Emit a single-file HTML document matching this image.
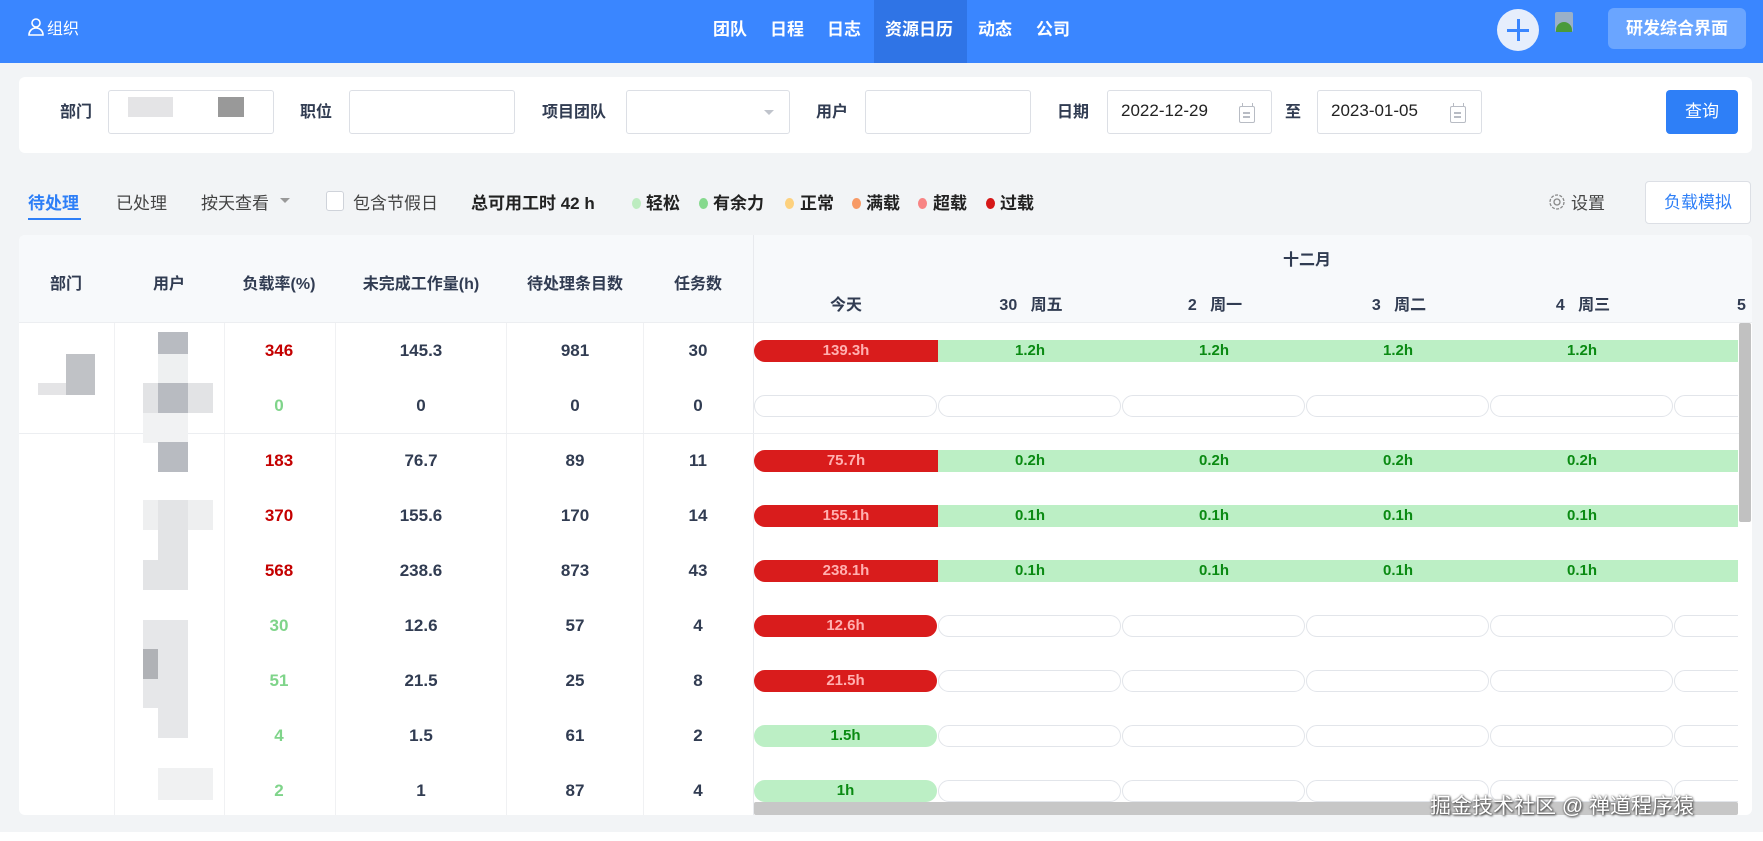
<!DOCTYPE html>
<html><head><meta charset="utf-8">
<style>
*{margin:0;padding:0;box-sizing:border-box}
body{width:1763px;height:841px;background:#f2f4f6;font-family:"Liberation Sans","Noto Sans CJK SC",sans-serif;position:relative;overflow:hidden;color:#313c52}
.a{position:absolute}
.hdr{left:0;top:0;width:1763px;height:63px;background:#3a86ff}
.nav{top:0;height:63px;line-height:60px;color:#fff;font-weight:bold;font-size:17px}
.card{background:#fff;border-radius:6px}
.lbl{font-size:16px;font-weight:bold;color:#313c52;line-height:20px}
.inp{height:44px;border:1px solid #dcdfe5;border-radius:3px;background:#fff}
.cal{width:16px;height:17px;border:1.5px solid #b8bcc4;border-radius:2px}
.cal:before{content:"";position:absolute;left:3px;top:5px;width:7px;height:1.5px;background:#b8bcc4;box-shadow:0 4px 0 #b8bcc4}
.cal:after{content:"";position:absolute;left:2px;top:-4px;width:9px;height:3px;border-left:1.5px solid #b8bcc4;border-right:1.5px solid #b8bcc4}
.th{font-size:16px;font-weight:bold;color:#313c52;text-align:center;transform:translateX(-50%);white-space:nowrap}
.td{font-size:17px;font-weight:bold;text-align:center;width:120px;margin-left:-60px;line-height:20px}
.r{color:#c40000}.g{color:#7fd48a}
.bar{height:22px;line-height:22px;font-size:15px;font-weight:bold;text-align:center}
.red{background:#d91c1c;color:#ffb0b0}
.grn{background:#bcefc5;color:#0a8a12}
.emp{height:22px;border:1px solid #e2e5ea;border-radius:11px;background:#fff}
.blk{background:#b8bbc1}
</style></head><body>
<div class="a hdr"></div>
<svg class="a" style="left:27px;top:17px" width="18" height="19" viewBox="0 0 18 19"><circle cx="9" cy="6" r="4" fill="none" stroke="#fff" stroke-width="1.6"/><path d="M2 18c0-4 3-7 7-7s7 3 7 7z" fill="none" stroke="#fff" stroke-width="1.6"/></svg>
<div class="a" style="left:47px;top:15px;color:#fff;font-size:16px">组织</div>
<div class="a" style="left:874px;top:0;width:93px;height:63px;background:#2f74e6"></div>
<div class="a nav" style="left:713px">团队</div>
<div class="a nav" style="left:770px">日程</div>
<div class="a nav" style="left:827px">日志</div>
<div class="a nav" style="left:885px">资源日历</div>
<div class="a nav" style="left:978px">动态</div>
<div class="a nav" style="left:1036px">公司</div>
<div class="a" style="left:1497px;top:9px;width:42px;height:42px;border-radius:50%;background:#e6eefc"></div>
<div class="a" style="left:1507px;top:29px;width:22px;height:2.5px;background:#3a86ff"></div>
<div class="a" style="left:1517px;top:19px;width:2.5px;height:22px;background:#3a86ff"></div>
<div class="a" style="left:1555px;top:12px;width:18px;height:20px;background:#9ab0c8;border-radius:2px"></div>
<div class="a" style="left:1556px;top:22px;width:16px;height:10px;background:#4a9a3a;border-radius:8px 8px 0 0"></div>
<div class="a" style="left:1608px;top:8px;width:138px;height:41px;border-radius:6px;background:#6aa5ff;color:#fff;font-weight:bold;font-size:17px;line-height:41px;text-align:center">研发综合界面</div>

<div class="a card" style="left:19px;top:77px;width:1733px;height:76px"></div>
<div class="a lbl" style="left:60px;top:103px">部门</div>
<div class="a inp" style="left:108px;top:90px;width:166px"></div>
<div class="a" style="left:128px;top:97px;width:45px;height:20px;background:#e4e4e6"></div>
<div class="a" style="left:218px;top:97px;width:26px;height:20px;background:#999"></div>
<div class="a lbl" style="left:300px;top:103px">职位</div>
<div class="a inp" style="left:349px;top:90px;width:166px"></div>
<div class="a lbl" style="left:542px;top:103px">项目团队</div>
<div class="a inp" style="left:626px;top:90px;width:164px"></div>
<div class="a" style="left:764px;top:110px;border:5px solid transparent;border-top:5px solid #c0c4cc"></div>
<div class="a lbl" style="left:816px;top:103px">用户</div>
<div class="a inp" style="left:865px;top:90px;width:166px"></div>
<div class="a lbl" style="left:1057px;top:103px">日期</div>
<div class="a inp" style="left:1107px;top:90px;width:165px"></div>
<div class="a" style="left:1121px;top:101px;font-size:17px;color:#222">2022-12-29</div>
<div class="a cal" style="left:1239px;top:106px"></div>
<div class="a lbl" style="left:1285px;top:103px">至</div>
<div class="a inp" style="left:1317px;top:90px;width:165px"></div>
<div class="a" style="left:1331px;top:101px;font-size:17px;color:#222">2023-01-05</div>
<div class="a cal" style="left:1450px;top:106px"></div>
<div class="a" style="left:1666px;top:90px;width:72px;height:44px;background:#2e7ff7;border-radius:4px;color:#fff;font-size:17px;line-height:44px;text-align:center">查询</div>

<div class="a" style="left:28px;top:189px;font-size:17px;color:#2e7ff7;font-weight:bold">待处理</div>
<div class="a" style="left:28px;top:218px;width:53px;height:2px;background:#2e7ff7"></div>
<div class="a" style="left:116px;top:189px;font-size:17px;color:#444">已处理</div>
<div class="a" style="left:201px;top:189px;font-size:17px;color:#444">按天查看</div>
<div class="a" style="left:280px;top:198px;border:5px solid transparent;border-top:5px solid #999"></div>
<div class="a" style="left:326px;top:191px;width:18px;height:20px;border:1px solid #cfd3da;border-radius:3px;background:#fff"></div>
<div class="a" style="left:353px;top:189px;font-size:17px;color:#444">包含节假日</div>
<div class="a" style="left:471px;top:189px;font-size:17px;font-weight:bold;color:#222">总可用工时 42 h</div>
<div class="a" style="left:632px;top:198px;width:9px;height:11px;border-radius:50%;background:#bdecc0"></div>
<div class="a" style="left:646px;top:189px;font-size:17px;font-weight:bold;color:#222">轻松</div>
<div class="a" style="left:699px;top:198px;width:9px;height:11px;border-radius:50%;background:#86d98e"></div>
<div class="a" style="left:713px;top:189px;font-size:17px;font-weight:bold;color:#222">有余力</div>
<div class="a" style="left:785px;top:198px;width:9px;height:11px;border-radius:50%;background:#fdd17e"></div>
<div class="a" style="left:800px;top:189px;font-size:17px;font-weight:bold;color:#222">正常</div>
<div class="a" style="left:852px;top:198px;width:9px;height:11px;border-radius:50%;background:#f79a66"></div>
<div class="a" style="left:866px;top:189px;font-size:17px;font-weight:bold;color:#222">满载</div>
<div class="a" style="left:918px;top:198px;width:9px;height:11px;border-radius:50%;background:#f88484"></div>
<div class="a" style="left:933px;top:189px;font-size:17px;font-weight:bold;color:#222">超载</div>
<div class="a" style="left:986px;top:198px;width:9px;height:11px;border-radius:50%;background:#d61818"></div>
<div class="a" style="left:1000px;top:189px;font-size:17px;font-weight:bold;color:#222">过载</div>
<svg class="a" style="left:1548px;top:193px" width="18" height="18" viewBox="0 0 18 18"><circle cx="9" cy="9" r="3" fill="none" stroke="#888" stroke-width="1.3"/><circle cx="9" cy="9" r="7" fill="none" stroke="#888" stroke-width="1.3" stroke-dasharray="3 1.4"/></svg>
<div class="a" style="left:1571px;top:189px;font-size:17px;color:#444">设置</div>
<div class="a" style="left:1645px;top:181px;width:106px;height:43px;border:1px solid #dcdfe5;border-radius:4px;background:#fff;color:#2e7ff7;font-size:17px;line-height:41px;text-align:center">负载模拟</div>

<div class="a card" style="left:19px;top:235px;width:1733px;height:580px;overflow:hidden">
  <div class="a" style="left:0;top:0;width:1733px;height:88px;background:#f7f9fb;border-bottom:1px solid #eceef1"></div>
</div>
<div class="a" style="left:753px;top:235px;width:1px;height:580px;background:#e8eaee"></div>
<div class="a" style="left:114px;top:323px;width:1px;height:492px;background:#f0f1f3"></div>
<div class="a" style="left:224px;top:323px;width:1px;height:492px;background:#f0f1f3"></div>
<div class="a" style="left:335px;top:323px;width:1px;height:492px;background:#f0f1f3"></div>
<div class="a" style="left:506px;top:323px;width:1px;height:492px;background:#f0f1f3"></div>
<div class="a" style="left:643px;top:323px;width:1px;height:492px;background:#f0f1f3"></div>
<div class="a" style="left:19px;top:433px;width:1720px;height:1px;background:#eceef1"></div>

<div class="a th" style="left:66px;top:270px">部门</div>
<div class="a th" style="left:169px;top:270px">用户</div>
<div class="a th" style="left:279px;top:270px">负载率(%)</div>
<div class="a th" style="left:421px;top:270px">未完成工作量(h)</div>
<div class="a th" style="left:575px;top:270px">待处理条目数</div>
<div class="a th" style="left:698px;top:270px">任务数</div>
<div class="a th" style="left:1307px;top:246px">十二月</div>
<div class="a th" style="left:846px;top:291px">今天</div>
<div class="a th" style="left:1031px;top:291px">30&nbsp;&nbsp;&nbsp;周五</div>
<div class="a th" style="left:1215px;top:291px">2&nbsp;&nbsp;&nbsp;周一</div>
<div class="a th" style="left:1399px;top:291px">3&nbsp;&nbsp;&nbsp;周二</div>
<div class="a th" style="left:1583px;top:291px">4&nbsp;&nbsp;&nbsp;周三</div>
<div class="a" style="left:1737px;top:296px;font-size:16px;font-weight:bold;color:#313c52;line-height:20px">5</div>

<div class="a" style="left:38px;top:383px;width:30px;height:12px;background:#e4e4e6"></div>
<div class="a blk" style="left:66px;top:354px;width:29px;height:41px;background:#c0c2c6"></div>
<div class="a blk" style="left:158px;top:332px;width:30px;height:22px"></div>
<div class="a" style="left:158px;top:354px;width:30px;height:30px;background:#eef0f1"></div>
<div class="a" style="left:143px;top:383px;width:70px;height:30px;background:#e2e3e5"></div>
<div class="a blk" style="left:158px;top:383px;width:30px;height:30px"></div>
<div class="a" style="left:143px;top:413px;width:45px;height:30px;background:#f1f2f3"></div>
<div class="a blk" style="left:158px;top:442px;width:30px;height:30px"></div>
<div class="a" style="left:143px;top:500px;width:70px;height:30px;background:#eeeff0"></div>
<div class="a" style="left:158px;top:500px;width:30px;height:60px;background:#e3e4e6"></div>
<div class="a" style="left:143px;top:560px;width:45px;height:30px;background:#e3e4e6"></div>
<div class="a" style="left:143px;top:620px;width:45px;height:88px;background:#e6e7e9"></div>
<div class="a" style="left:143px;top:649px;width:15px;height:30px;background:#b0b2b6"></div>
<div class="a" style="left:158px;top:708px;width:30px;height:30px;background:#e6e7e9"></div>
<div class="a" style="left:158px;top:768px;width:55px;height:32px;background:#f0f1f2"></div>

<div class="a td r" style="left:279px;top:341px">346</div><div class="a td" style="left:421px;top:341px">145.3</div><div class="a td" style="left:575px;top:341px">981</div><div class="a td" style="left:698px;top:341px">30</div>
<div class="a td g" style="left:279px;top:396px">0</div><div class="a td" style="left:421px;top:396px">0</div><div class="a td" style="left:575px;top:396px">0</div><div class="a td" style="left:698px;top:396px">0</div>
<div class="a td r" style="left:279px;top:451px">183</div><div class="a td" style="left:421px;top:451px">76.7</div><div class="a td" style="left:575px;top:451px">89</div><div class="a td" style="left:698px;top:451px">11</div>
<div class="a td r" style="left:279px;top:506px">370</div><div class="a td" style="left:421px;top:506px">155.6</div><div class="a td" style="left:575px;top:506px">170</div><div class="a td" style="left:698px;top:506px">14</div>
<div class="a td r" style="left:279px;top:561px">568</div><div class="a td" style="left:421px;top:561px">238.6</div><div class="a td" style="left:575px;top:561px">873</div><div class="a td" style="left:698px;top:561px">43</div>
<div class="a td g" style="left:279px;top:616px">30</div><div class="a td" style="left:421px;top:616px">12.6</div><div class="a td" style="left:575px;top:616px">57</div><div class="a td" style="left:698px;top:616px">4</div>
<div class="a td g" style="left:279px;top:671px">51</div><div class="a td" style="left:421px;top:671px">21.5</div><div class="a td" style="left:575px;top:671px">25</div><div class="a td" style="left:698px;top:671px">8</div>
<div class="a td g" style="left:279px;top:726px">4</div><div class="a td" style="left:421px;top:726px">1.5</div><div class="a td" style="left:575px;top:726px">61</div><div class="a td" style="left:698px;top:726px">2</div>
<div class="a td g" style="left:279px;top:781px">2</div><div class="a td" style="left:421px;top:781px">1</div><div class="a td" style="left:575px;top:781px">87</div><div class="a td" style="left:698px;top:781px">4</div>

<div class="a" style="left:754px;top:323px;width:984px;height:480px;overflow:hidden">
 <div class="a bar red" style="left:0;top:17px;width:184px;border-radius:11px 0 0 11px">139.3h</div>
 <div class="a bar grn" style="left:184px;top:17px;width:800px"><span class="a" style="left:0;width:184px">1.2h</span><span class="a" style="left:184px;width:184px">1.2h</span><span class="a" style="left:368px;width:184px">1.2h</span><span class="a" style="left:552px;width:184px">1.2h</span></div>
 <div class="a emp" style="left:0;top:72px;width:183px"></div><div class="a emp" style="left:184px;top:72px;width:183px"></div><div class="a emp" style="left:368px;top:72px;width:183px"></div><div class="a emp" style="left:552px;top:72px;width:183px"></div><div class="a emp" style="left:736px;top:72px;width:183px"></div><div class="a emp" style="left:920px;top:72px;width:183px"></div>
 <div class="a bar red" style="left:0;top:127px;width:184px;border-radius:11px 0 0 11px">75.7h</div>
 <div class="a bar grn" style="left:184px;top:127px;width:800px"><span class="a" style="left:0;width:184px">0.2h</span><span class="a" style="left:184px;width:184px">0.2h</span><span class="a" style="left:368px;width:184px">0.2h</span><span class="a" style="left:552px;width:184px">0.2h</span></div>
 <div class="a bar red" style="left:0;top:182px;width:184px;border-radius:11px 0 0 11px">155.1h</div>
 <div class="a bar grn" style="left:184px;top:182px;width:800px"><span class="a" style="left:0;width:184px">0.1h</span><span class="a" style="left:184px;width:184px">0.1h</span><span class="a" style="left:368px;width:184px">0.1h</span><span class="a" style="left:552px;width:184px">0.1h</span></div>
 <div class="a bar red" style="left:0;top:237px;width:184px;border-radius:11px 0 0 11px">238.1h</div>
 <div class="a bar grn" style="left:184px;top:237px;width:800px"><span class="a" style="left:0;width:184px">0.1h</span><span class="a" style="left:184px;width:184px">0.1h</span><span class="a" style="left:368px;width:184px">0.1h</span><span class="a" style="left:552px;width:184px">0.1h</span></div>
 <div class="a bar red" style="left:0;top:292px;width:183px;border-radius:11px">12.6h</div>
 <div class="a emp" style="left:184px;top:292px;width:183px"></div><div class="a emp" style="left:368px;top:292px;width:183px"></div><div class="a emp" style="left:552px;top:292px;width:183px"></div><div class="a emp" style="left:736px;top:292px;width:183px"></div><div class="a emp" style="left:920px;top:292px;width:183px"></div>
 <div class="a bar red" style="left:0;top:347px;width:183px;border-radius:11px">21.5h</div>
 <div class="a emp" style="left:184px;top:347px;width:183px"></div><div class="a emp" style="left:368px;top:347px;width:183px"></div><div class="a emp" style="left:552px;top:347px;width:183px"></div><div class="a emp" style="left:736px;top:347px;width:183px"></div><div class="a emp" style="left:920px;top:347px;width:183px"></div>
 <div class="a bar grn" style="left:0;top:402px;width:183px;border-radius:11px">1.5h</div>
 <div class="a emp" style="left:184px;top:402px;width:183px"></div><div class="a emp" style="left:368px;top:402px;width:183px"></div><div class="a emp" style="left:552px;top:402px;width:183px"></div><div class="a emp" style="left:736px;top:402px;width:183px"></div><div class="a emp" style="left:920px;top:402px;width:183px"></div>
 <div class="a bar grn" style="left:0;top:457px;width:183px;border-radius:11px">1h</div>
 <div class="a emp" style="left:184px;top:457px;width:183px"></div><div class="a emp" style="left:368px;top:457px;width:183px"></div><div class="a emp" style="left:552px;top:457px;width:183px"></div><div class="a emp" style="left:736px;top:457px;width:183px"></div><div class="a emp" style="left:920px;top:457px;width:183px"></div>
</div>
<div class="a" style="left:1739px;top:323px;width:12px;height:199px;background:#c1c1c1;border-radius:2px"></div>
<div class="a" style="left:754px;top:802px;width:984px;height:13px;background:#c7c7c7;border-radius:2px"></div>
<div class="a" style="left:1430px;top:790px;font-size:21px;color:#fff;text-shadow:0 0 2px #555,1px 1px 2px #333;white-space:nowrap">掘金技术社区 @ 禅道程序猿</div>
<div class="a" style="left:0;top:832px;width:1763px;height:9px;background:#fff"></div>
</body></html>
